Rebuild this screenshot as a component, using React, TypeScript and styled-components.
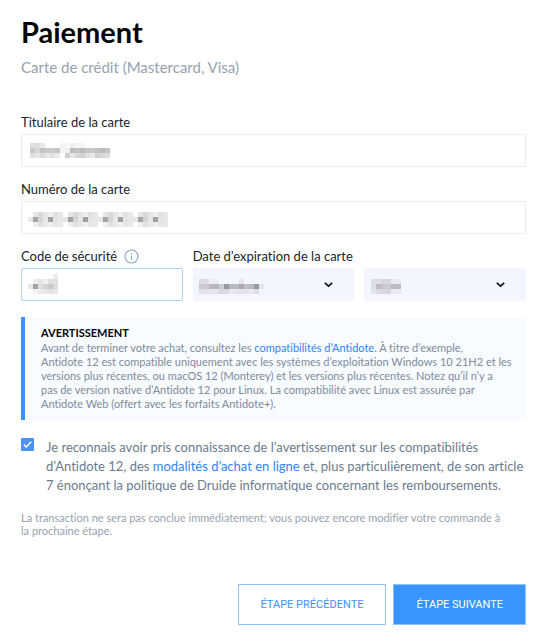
import React from "react";
import styled, { createGlobalStyle, css } from "styled-components";

const GlobalStyle = createGlobalStyle`
  *, *::before, *::after { box-sizing: border-box; }
  body {
    margin: 0;
    background: #fff;
    color: #20242a;
    font-family: Lato, "Liberation Sans", sans-serif;
    font-variant-ligatures: none;
  }
`;

const Page = styled.form`
  padding: 15px 28px 19px 21px;
`;

const Title = styled.h1`
  margin: 0;
  color: #050607;
  font-size: 29px;
  line-height: 34px;
  font-weight: 700;
`;

const Subtitle = styled.p`
  margin: 8px 0 35px;
  color: #96a3b0;
  font-size: 15px;
  line-height: 20px;
`;

const Field = styled.div`
  margin-bottom: 12px;
`;

const LabelRow = styled.div`
  display: flex;
  align-items: center;
  gap: 7px;
  height: 20px;
  margin-bottom: 2px;
  font-size: 13px;
  line-height: 20px;
`;

const Control = styled.div`
  position: relative;
`;

const controlBase = css`
  display: block;
  width: 100%;
  height: 33px;
  margin: 0;
  padding: 0 8px;
  border-radius: 2px;
  font: 13px Lato, sans-serif;
  outline: none;
`;

const TextInput = styled.input<{ $active?: boolean }>`
  ${controlBase}
  border: 1px solid ${(p) => (p.$active ? "#b0d3f2" : "#e8edf3")};
  background: #fff;
`;

const Select = styled.select`
  ${controlBase}
  border: 0;
  appearance: none;
  background: #f3f6ff;
`;

const MosaicSvg = styled.svg<{ $left: number; $top: number }>`
  position: absolute;
  left: ${(p) => p.$left}px;
  top: ${(p) => p.$top}px;
  pointer-events: none;
`;

const Chevron = styled.svg`
  position: absolute;
  right: 20px;
  top: 12px;
  pointer-events: none;
`;

const Columns = styled.div`
  display: grid;
  grid-template-columns: 1fr 1fr 1fr;
  column-gap: 10px;
  margin-bottom: 16px;
`;

const ExpiryGroup = styled.div`
  grid-column: span 2;
`;

const ExpirySelects = styled.div`
  display: grid;
  grid-template-columns: 1fr 1fr;
  gap: 10px;
`;

const Notice = styled.section`
  padding: 8px 8px 9px 16px;
  border-left: 4px solid #3894ff;
  background: #f8fbff;
  color: #7e8b99;
  font-size: 11px;
  line-height: 14px;
`;

const NoticeTitle = styled.h2`
  margin: 0;
  color: #050607;
  font-size: 11px;
  line-height: 16px;
  font-weight: 700;
`;

const Paragraph = styled.p`
  margin: 0;
`;

const Line = styled.span`
  display: block;
`;

const Link = styled.a`
  color: #2f86f6;
  text-decoration: none;
`;

const Consent = styled.div`
  display: flex;
  gap: 12px;
  margin-top: 18px;
  color: #6b7b8d;
  font-size: 13px;
  line-height: 19px;
`;

const CheckWrap = styled.span`
  position: relative;
  flex: none;
  width: 13px;
  height: 13px;
`;

const Checkbox = styled.input`
  display: block;
  appearance: none;
  width: 13px;
  height: 13px;
  margin: 0;
  border-radius: 1px;
  background: #4c92ee;
`;

const Tick = styled.svg`
  position: absolute;
  inset: 0;
  pointer-events: none;
`;

const Footnote = styled.p`
  margin: 16px 0 47px;
  color: #96a3b0;
  font-size: 11px;
  line-height: 13px;
`;

const Actions = styled.div`
  display: flex;
  justify-content: flex-end;
  gap: 7px;
`;

const Button = styled.button<{ $primary?: boolean }>`
  height: 41px;
  padding: 0 22px;
  border: 1px solid #8dc2fb;
  background: ${(p) => (p.$primary ? "#3894ff" : "#fff")};
  color: ${(p) => (p.$primary ? "#fff" : "#3894ff")};
  font: 11px Roboto, sans-serif;
`;

function Mosaic({ rows, left, top, cool }: { rows: string[]; left: number; top: number; cool?: boolean }) {
  const grid = rows.map((r) => r.split(" "));
  const fill = (c: string) => {
    const v = parseInt(c, 16);
    return `rgb(${v}, ${v}, ${cool ? v + 8 : v})`;
  };
  return (
    <MosaicSvg $left={left} $top={top} width={grid[0].length * 5} height={grid.length * 5} shapeRendering="crispEdges" aria-hidden="true">
      {grid.map((r, y) =>
        r.map((c, x) => (c === "--" ? null : <rect key={`${x}-${y}`} x={x * 5} y={y * 5} width={5} height={5} fill={fill(c)} />)),
      )}
    </MosaicSvg>
  );
}

const HOLDER = [
  "e0 dd e8 -- -- -- f4 f8 f0 f4 f6 -- -- -- -- --",
  "c8 d8 c4 c8 cc c4 f4 f0 bc c4 bc c4 c8 c2 bc c4",
  "e0 e8 dc e8 e0 ec -- d0 e8 d8 d0 e0 e8 d0 d8 dc",
];
const NUMBER = [
  "-- e6 da e6 f0 e0 e8 -- e6 da e6 f0 e0 e8 -- e6 da e6 f0 e0 e8 -- e6 da e6 f0 e0 e8",
  "e8 a4 d4 e6 a0 e4 e8 e6 a4 d4 e6 a0 e4 e8 e6 a4 d4 e6 a0 e4 e8 e6 a4 d4 e6 a0 e4 e8",
  "-- ee e2 ea f0 e6 ea -- ee e2 ea f0 e6 ea -- ee e2 ea f0 e6 ea -- ee e2 ea f0 e6 ea",
];
const CODE = ["-- -- -- -- -- ec", "-- f0 e4 f0 e0 e2", "e8 a4 e0 d4 c8 dc", "-- f4 ec e8 e4 e8"];
const MONTH = [
  "da dc ec ec -- -- -- -- e6 -- -- -- --",
  "c8 ca b8 b6 cc 98 b8 bc a8 c0 b8 98 e4",
  "e0 e2 e6 e4 d8 d8 e8 e6 e2 e4 e8 de --",
];
const YEAR = ["df df d6 d6 e9 e9", "dc bc c8 ca bc bc", "e4 dc d8 d6 e9 e9"];

function Arrow() {
  return (
    <Chevron width="11" height="10" viewBox="0 0 11 10" fill="none" aria-hidden="true">
      <path d="M1.8 2.8 5.5 6.2 9.2 2.8" stroke="#101418" strokeWidth="1.7" />
    </Chevron>
  );
}

export default function App() {
  return (
    <>
      <GlobalStyle />
      <Page onSubmit={(e) => e.preventDefault()}>
        <Title>Paiement</Title>
        <Subtitle>Carte de crédit (Mastercard, Visa)</Subtitle>
        <Field>
          <LabelRow><label htmlFor="holder">Titulaire de la carte</label></LabelRow>
          <Control>
            <TextInput id="holder" />
            <Mosaic rows={HOLDER} left={9} top={9} />
          </Control>
        </Field>
        <Field>
          <LabelRow><label htmlFor="number">Numéro de la carte</label></LabelRow>
          <Control>
            <TextInput id="number" />
            <Mosaic rows={NUMBER} left={7} top={11} />
          </Control>
        </Field>
        <Columns>
          <div>
            <LabelRow>
              <label htmlFor="code">Code de sécurité</label>
              <svg width="15" height="15" viewBox="0 0 15 15" fill="none" stroke="#8ba4bd" aria-hidden="true">
                <circle cx="7.5" cy="7.5" r="6.5" strokeWidth="1.1" />
                <path d="M7.5 6.6v4.5M7.5 4v1.2" strokeWidth="1.1" />
              </svg>
            </LabelRow>
            <Control>
              <TextInput id="code" $active />
              <Mosaic rows={CODE} left={7} top={6} />
            </Control>
          </div>
          <ExpiryGroup>
            <LabelRow><label id="expiry" htmlFor="month">Date d’expiration de la carte</label></LabelRow>
            <ExpirySelects>
              <Control>
                <Select id="month" />
                <Mosaic rows={MONTH} left={6} top={11} cool />
                <Arrow />
              </Control>
              <Control>
                <Select aria-labelledby="expiry" />
                <Mosaic rows={YEAR} left={7} top={11} cool />
                <Arrow />
              </Control>
            </ExpirySelects>
          </ExpiryGroup>
        </Columns>
        <Notice>
          <NoticeTitle>AVERTISSEMENT</NoticeTitle>
          <Paragraph>
            <Line>Avant de terminer votre achat, consultez les <Link href="#compatibilites">compatibilités d’Antidote</Link>. À titre d’exemple,</Line>
            <Line>Antidote 12 est compatible uniquement avec les systèmes d’exploitation Windows 10 21H2 et les</Line>
            <Line>versions plus récentes, ou macOS 12 (Monterey) et les versions plus récentes. Notez qu’il n’y a</Line>
            <Line>pas de version native d’Antidote 12 pour Linux. La compatibilité avec Linux est assurée par</Line>
            <Line>Antidote Web (offert avec les forfaits Antidote+).</Line>
          </Paragraph>
        </Notice>
        <Consent>
          <CheckWrap>
            <Checkbox id="consent" type="checkbox" defaultChecked />
            <Tick width="13" height="13" viewBox="0 0 13 13" fill="none" aria-hidden="true">
              <path d="m2.8 6.4 2.4 2.5 5-5.2" stroke="#fff" strokeWidth="1.5" />
            </Tick>
          </CheckWrap>
          <label htmlFor="consent">
            <Line>Je reconnais avoir pris connaissance de l’avertissement sur les compatibilités</Line>
            <Line>d’Antidote 12, des <Link href="#modalites">modalités d’achat en ligne</Link> et, plus particulièrement, de son article</Line>
            <Line>7 énonçant la politique de Druide informatique concernant les remboursements.</Line>
          </label>
        </Consent>
        <Footnote>
          <Line>La transaction ne sera pas conclue immédiatement; vous pouvez encore modifier votre commande à</Line>
          <Line>la prochaine étape.</Line>
        </Footnote>
        <Actions>
          <Button type="button">ÉTAPE PRÉCÉDENTE</Button>
          <Button type="submit" $primary>ÉTAPE SUIVANTE</Button>
        </Actions>
      </Page>
    </>
  );
}
